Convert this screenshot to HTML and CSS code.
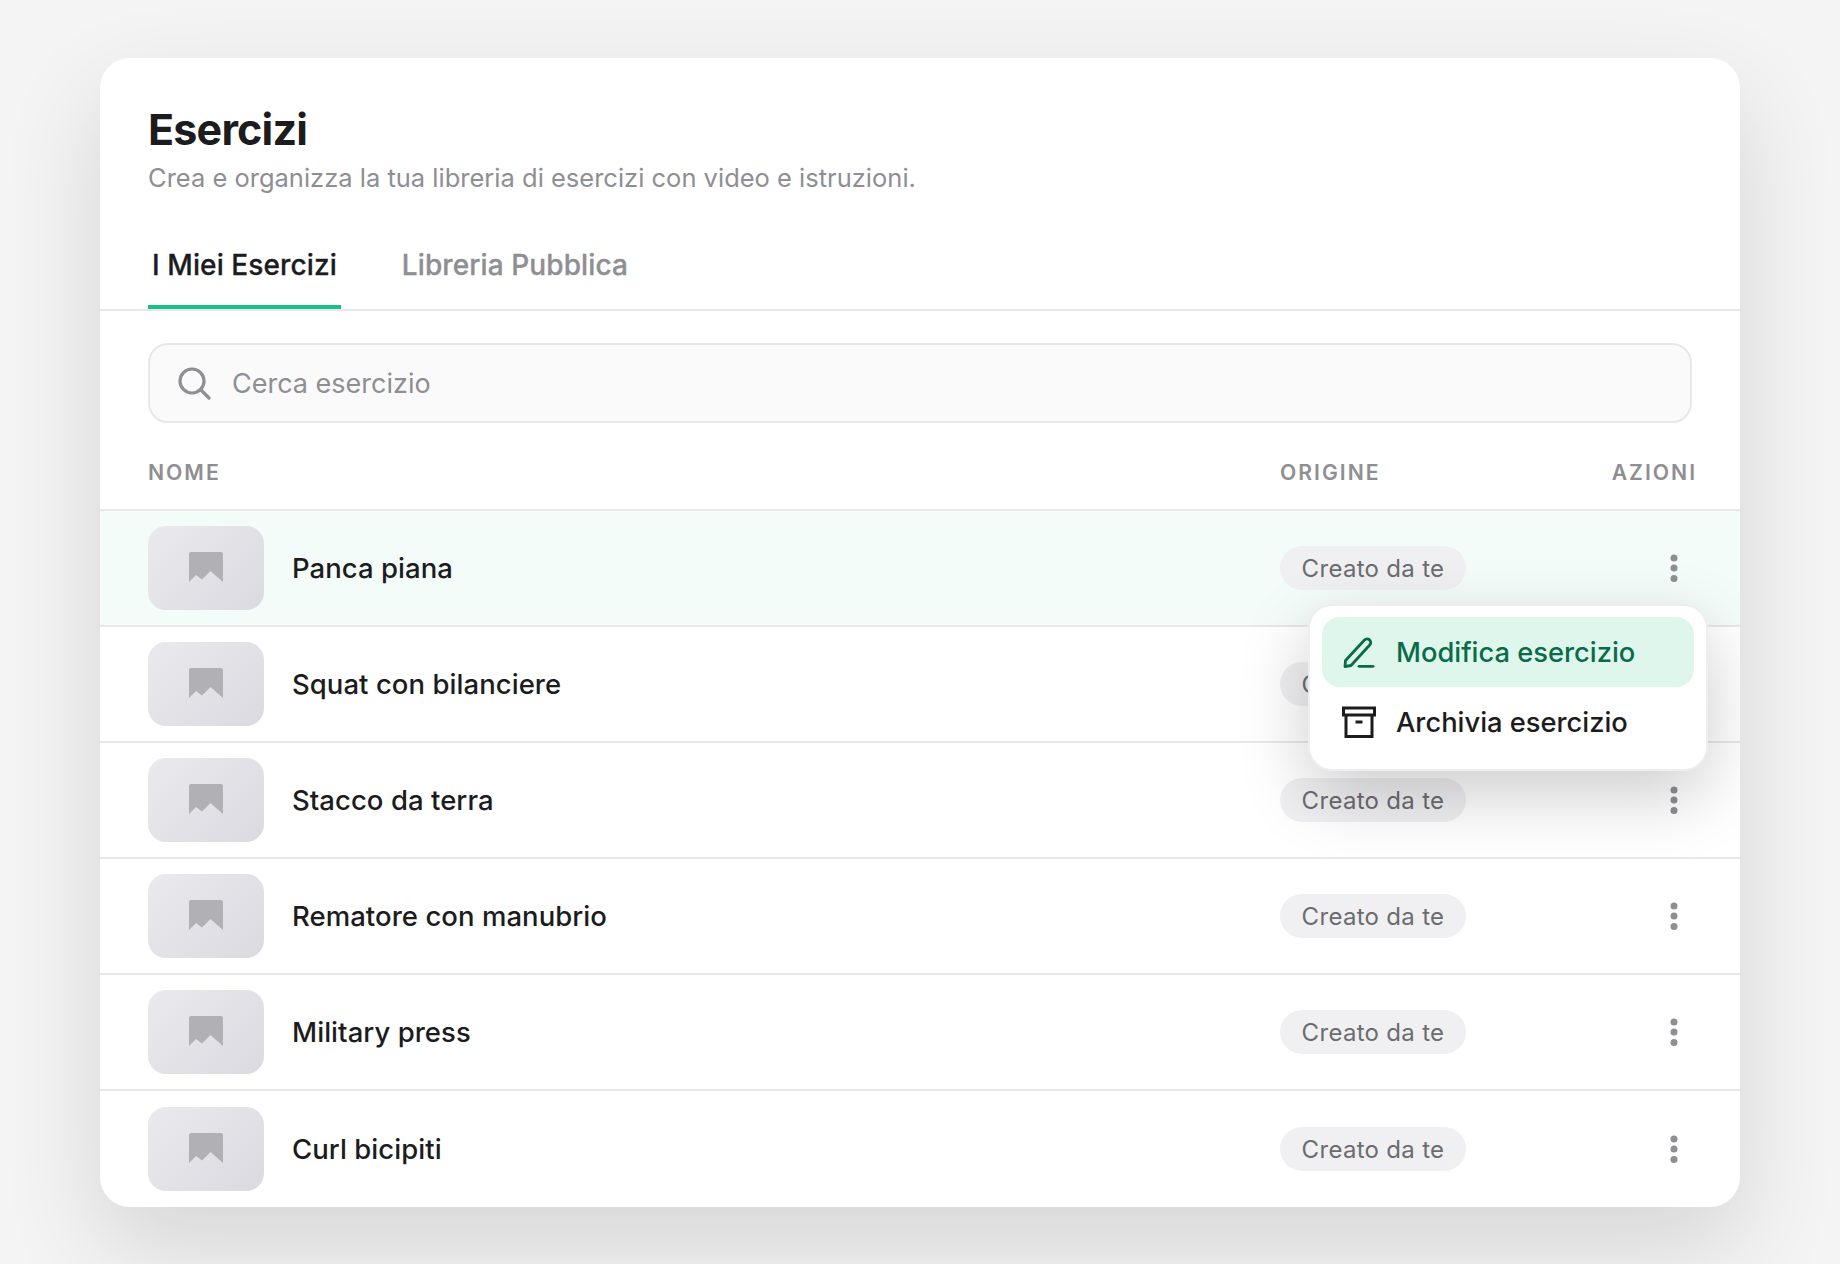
FILE: index.html
```html
<!DOCTYPE html>
<html lang="it">
<head>
  <meta charset="UTF-8">
  <meta name="viewport" content="width=device-width, initial-scale=1.0">
  <title>Esercizi</title>
  <link rel="stylesheet" href="styles.css">
</head>
<body>
<svg class="defs" width="0" height="0" aria-hidden="true">
  <symbol id="thumb-icon" viewBox="0 0 34 30">
    <path d="M2 0H32a2 2 0 0 1 2 2V30L21.500 19 13 27.500 7 23 0 30V2a2 2 0 0 1 2-2Z"/>
  </symbol>
  <symbol id="kebab-icon" viewBox="0 0 8 28">
    <circle cx="4" cy="4" r="3.500"/>
    <circle cx="4" cy="14" r="3.500"/>
    <circle cx="4" cy="24.500" r="3.500"/>
  </symbol>
</svg>

<main class="card">
  <header class="page-head">
    <h1>Esercizi</h1>
    <p class="subtitle">Crea e organizza la tua libreria di esercizi con video e istruzioni.</p>
  </header>

  <nav class="tabs">
    <a class="tab tab-active">I Miei Esercizi</a>
    <a class="tab">Libreria Pubblica</a>
  </nav>

  <div class="search">
    <svg class="search-icon" viewBox="0 0 34 34" fill="none" stroke="currentColor" stroke-width="3.200" stroke-linecap="round">
      <circle cx="15" cy="15" r="12"/>
      <path d="M24 24 32 32"/>
    </svg>
    <span class="search-text">Cerca esercizio</span>
  </div>

  <div class="table-head">
    <span>NOME</span>
    <span>ORIGINE</span>
    <span class="head-actions">AZIONI</span>
  </div>

  <div class="rows">
    <div class="row row-active">
      <div class="thumb"><svg class="thumb-icon"><use href="#thumb-icon"/></svg></div>
      <span class="name">Panca piana</span>
      <span class="pill">Creato da te</span>
      <svg class="kebab"><use href="#kebab-icon"/></svg>
    </div>
    <div class="row">
      <div class="thumb"><svg class="thumb-icon"><use href="#thumb-icon"/></svg></div>
      <span class="name">Squat con bilanciere</span>
      <span class="pill">Creato da te</span>
      <svg class="kebab"><use href="#kebab-icon"/></svg>
    </div>
    <div class="row">
      <div class="thumb"><svg class="thumb-icon"><use href="#thumb-icon"/></svg></div>
      <span class="name">Stacco da terra</span>
      <span class="pill">Creato da te</span>
      <svg class="kebab"><use href="#kebab-icon"/></svg>
    </div>
    <div class="row">
      <div class="thumb"><svg class="thumb-icon"><use href="#thumb-icon"/></svg></div>
      <span class="name">Rematore con manubrio</span>
      <span class="pill">Creato da te</span>
      <svg class="kebab"><use href="#kebab-icon"/></svg>
    </div>
    <div class="row">
      <div class="thumb"><svg class="thumb-icon"><use href="#thumb-icon"/></svg></div>
      <span class="name">Military press</span>
      <span class="pill">Creato da te</span>
      <svg class="kebab"><use href="#kebab-icon"/></svg>
    </div>
    <div class="row row-last">
      <div class="thumb"><svg class="thumb-icon"><use href="#thumb-icon"/></svg></div>
      <span class="name">Curl bicipiti</span>
      <span class="pill">Creato da te</span>
      <svg class="kebab"><use href="#kebab-icon"/></svg>
    </div>

    <!-- Menu azioni aperto sulla prima riga -->
    <div class="menu">
      <div class="menu-item menu-item-active">
        <svg class="menu-icon" viewBox="0 0 34 34" fill="none" stroke="currentColor" stroke-width="2.800" stroke-linejoin="round" stroke-linecap="round">
          <path d="M3.500 25.500 22.500 5a3.600 3.600 0 0 1 5.200 5L9 30.500 3 31.500Z"/>
          <path d="M17 31.300H31"/>
        </svg>
        <span>Modifica esercizio</span>
      </div>
      <div class="menu-item">
        <svg class="menu-icon" viewBox="0 0 34 34" fill="none" stroke="currentColor" stroke-width="3">
          <path d="M1.500 3H32.500V10H1.500Z"/>
          <path d="M4 10V31.500H30V10"/>
          <path d="M13.500 17H20.500"/>
        </svg>
        <span>Archivia esercizio</span>
      </div>
    </div>
  </div>
</main>
</body>
</html>
```

FILE: styles.css
```css
* {
  margin: 0;
  padding: 0;
  box-sizing: border-box;
  font-family: 'Inter', 'Liberation Sans', sans-serif;
}

body {
  width: 1840px;
  height: 1264px;
  overflow: hidden;
  background: #f4f4f4;
  color: #1c1c1e;
  padding-top: 58px;
}

.defs {
  position: absolute;
}

.card {
  width: 1640px;
  height: 1149px;
  margin-left: 100px;
  background: #fff;
  border-radius: 30px;
  box-shadow: 0 40px 100px rgba(0, 0, 0, 0.13);
  display: flex;
  flex-direction: column;
  overflow: hidden;
}

.page-head {
  padding: 45px 48px 0;
}

h1 {
  font-size: 43px;
  font-weight: 700;
  line-height: 52px;
  letter-spacing: -0.8px;
}

.subtitle {
  font-size: 25.500px;
  line-height: 32px;
  color: #8e8e93;
  margin-top: 7px;
}

.tabs {
  display: flex;
  gap: 57px;
  padding: 0 48px;
  margin-top: 37px;
  height: 80px;
  border-bottom: 2px solid #e8e8ea;
}

.tab {
  font-size: 28px;
  font-weight: 500;
  line-height: 34px;
  letter-spacing: 0.1px;
  -webkit-text-stroke: 0.3px currentColor;
  color: #8e8e93;
  padding: 17px 4px 0;
  height: 78px;
}

.tab-active {
  color: #1c1c1e;
  border-bottom: 4px solid #17c084;
}

.search {
  margin: 32px 48px 0;
  height: 80px;
  background: #fafafa;
  border: 2px solid #e8e8ea;
  border-radius: 20px;
  display: flex;
  align-items: center;
  gap: 21px;
  padding-left: 27px;
  color: #8e8e93;
}

.search-icon {
  width: 34px;
  height: 34px;
}

.search-text {
  font-size: 27px;
}

.table-head {
  display: grid;
  grid-template-columns: 1132px 1fr auto;
  align-items: center;
  height: 88px;
  padding: 12px 43px 0 48px;
  font-size: 21.200px;
  font-weight: 600;
  letter-spacing: 2px;
  color: #8e8e93;
  border-bottom: 2px solid #e8e8ea;
}

.rows {
  position: relative;
}

.row {
  display: flex;
  align-items: center;
  height: 116px;
  padding: 0 48px;
  border-bottom: 2px solid #e8e8ea;
}

.row-last {
  border-bottom: none;
}

.row-active {
  background: #f3fcf9;
}

.thumb {
  width: 116px;
  height: 84px;
  padding-bottom: 3px;
  border-radius: 18px;
  background: linear-gradient(135deg, #e9e9ee, #dadae0);
  display: flex;
  align-items: center;
  justify-content: center;
  flex-shrink: 0;
}

.thumb-icon {
  width: 34px;
  height: 30px;
  fill: #b0b0b5;
}

.name {
  margin-left: 28px;
  width: 988px;
  font-size: 27.500px;
  font-weight: 500;
  letter-spacing: 0.05px;
}

.pill {
  width: 186px;
  height: 44px;
  border-radius: 22px;
  background: #f0f0f2;
  color: #6c6c70;
  font-size: 24px;
  letter-spacing: 0.3px;
  display: flex;
  align-items: center;
  justify-content: center;
}

.kebab {
  width: 8px;
  height: 28px;
  margin-left: 204px;
  fill: #8e8e93;
}

.menu {
  position: absolute;
  top: 93px;
  left: 1208px;
  width: 400px;
  height: 167px;
  background: #fff;
  border: 2px solid #eeeeef;
  border-radius: 24px;
  padding: 11px 12px 0;
  box-shadow: 0 24px 70px rgba(0, 0, 0, 0.2);
}

.menu-item {
  display: flex;
  align-items: center;
  height: 70px;
  padding-left: 20px;
  gap: 20px;
  border-radius: 18px;
  font-size: 27.300px;
  font-weight: 500;
}

.menu-item-active {
  background: #dff6ec;
  color: #0a6b4a;
}

.menu-icon {
  width: 34px;
  height: 34px;
  flex-shrink: 0;
}
```
